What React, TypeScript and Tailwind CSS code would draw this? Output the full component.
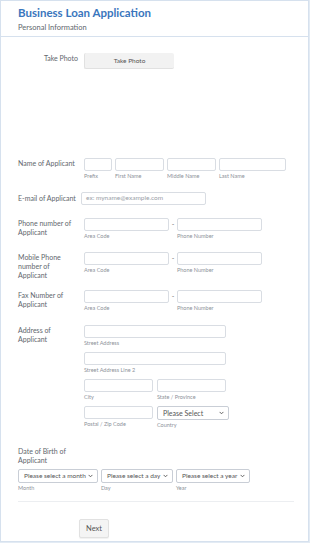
import React from 'react';

const font = { fontFamily: 'Lato, "Noto Sans", sans-serif' };

function Input({ className = '', placeholder }: { className?: string; placeholder?: string }) {
    return (
        <div className={`h-[13px] border border-[#d9dde3] rounded-[2px] bg-white flex items-center px-[4px] ${className}`}>
            {placeholder && <span className="text-[6.5px] text-[#9aa0a8] leading-none whitespace-nowrap">{placeholder}</span>}
        </div>
    );
}

function Chevron() {
    return (
        <svg width="5" height="4" viewBox="0 0 5 4" className="shrink-0">
            <path d="M0.6 0.9 L2.5 2.8 L4.4 0.9" fill="none" stroke="#555" strokeWidth="0.9" />
        </svg>
    );
}

function Select({ className = '', text, size = 'text-[6.5px]' }: { className?: string; text: string; size?: string }) {
    return (
        <div className={`h-[14px] border border-[#c9ced6] rounded-[2px] bg-white flex items-center justify-between pl-[5px] pr-[4px] gap-[2px] ${className}`}>
            <span className={`${size} text-[#555] leading-none whitespace-nowrap`}>{text}</span>
            <Chevron />
        </div>
    );
}

function Sub({ children }: { children: React.ReactNode }) {
    return <div className="text-[5.5px] leading-[7px] text-[#8d929a] mt-[2px] whitespace-nowrap">{children}</div>;
}

function Field({ width, sub }: { width: string; sub: string }) {
    return (
        <div className={width}>
            <Input />
            <Sub>{sub}</Sub>
        </div>
    );
}

function Label({ children }: { children: React.ReactNode }) {
    return <div className="w-[66px] shrink-0 pr-[8px] text-[7px] leading-[9px] text-[#62676e] pt-[1px]">{children}</div>;
}

function PhoneRow() {
    return (
        <div className="flex items-start">
            <Field width="w-[85px]" sub="Area Code" />
            <div className="w-[8px] text-center text-[7px] leading-[12px] text-[#777]">-</div>
            <Field width="w-[85px]" sub="Phone Number" />
        </div>
    );
}

export default function App() {
    return (
        <div style={font} className="w-[310px] h-[543px] bg-[#e3ebf4] overflow-hidden">
            <div className="w-[309px] h-[542px] bg-white border border-[#d6e1ee] flex flex-col">
                {/* header */}
                <div className="h-[36px] border-b border-[#d6e1ee] pl-[17px] pr-[16px] pt-[4px]">
                    <h1 className="text-[11.5px] leading-[15px] font-bold text-[#3a76bd]">Business Loan Application</h1>
                    <p className="mt-[2px] text-[7.5px] leading-[11px] text-[#62676e]">Personal Information</p>
                </div>

                {/* take photo widget */}
                <div className="h-[120px] pt-[16px] flex items-start">
                    <div className="w-[83px] shrink-0 pr-[6px] text-right text-[7px] leading-[10px] text-[#62676e]">Take Photo</div>
                    <div className="w-[90px] h-[16px] bg-[#f2f2f2] border-l border-b border-[#e1e1e1] rounded-[2px] flex items-center justify-center text-[6.5px] text-[#555]">Take Photo</div>
                </div>

                <div className="pl-[17px]">
                    {/* name */}
                    <div className="h-[35px] pt-[1px] flex items-start">
                        <Label>Name of Applicant</Label>
                        <div className="flex gap-[3px]">
                            <Field width="w-[28px]" sub="Prefix" />
                            <Field width="w-[49px]" sub="First Name" />
                            <Field width="w-[49px]" sub="Middle Name" />
                            <Field width="w-[67px]" sub="Last Name" />
                        </div>
                    </div>

                    {/* email */}
                    <div className="h-[26px] flex items-start">
                        <div className="w-[63px] shrink-0 text-[7px] leading-[9px] text-[#62676e] pt-[2px] whitespace-nowrap">E-mail of Applicant</div>
                        <Input className="w-[125px]" placeholder="ex: myname@example.com" />
                    </div>

                    {/* phone */}
                    <div className="h-[34px] flex items-start">
                        <Label>Phone number of Applicant</Label>
                        <PhoneRow />
                    </div>

                    {/* mobile */}
                    <div className="h-[38px] flex items-start">
                        <Label>Mobile Phone number of Applicant</Label>
                        <PhoneRow />
                    </div>

                    {/* fax */}
                    <div className="h-[35px] flex items-start">
                        <Label>Fax Number of Applicant</Label>
                        <PhoneRow />
                    </div>

                    {/* address */}
                    <div className="h-[122px] flex items-start">
                        <Label>Address of Applicant</Label>
                        <div className="flex flex-col gap-[5px]">
                            <Field width="w-[142px]" sub="Street Address" />
                            <Field width="w-[142px]" sub="Street Address Line 2" />
                            <div className="flex gap-[4px]">
                                <Field width="w-[69px]" sub="City" />
                                <Field width="w-[69px]" sub="State / Province" />
                            </div>
                            <div className="flex gap-[4px] items-start">
                                <Field width="w-[69px]" sub="Postal / Zip Code" />
                                <div className="w-[72px]">
                                    <Select text="Please Select" size="text-[7px]" />
                                    <Sub>Country</Sub>
                                </div>
                            </div>
                        </div>
                    </div>

                    {/* date of birth */}
                    <div className="h-[54px] pr-[16px]">
                        <div className="w-[66px] text-[7px] leading-[9px] text-[#62676e]">Date of Birth of Applicant</div>
                        <div className="flex gap-[3px] mt-[4px]">
                            <div className="w-[80px]">
                                <Select text="Please select a month" />
                                <Sub>Month</Sub>
                            </div>
                            <div className="w-[72px]">
                                <Select text="Please select a day" />
                                <Sub>Day</Sub>
                            </div>
                            <div className="w-[74px]">
                                <Select text="Please select a year" />
                                <Sub>Year</Sub>
                            </div>
                        </div>
                    </div>

                    <div className="w-[276px] border-t border-[#eceef1]" />

                    <div className="pt-[11px] pl-[61px]">
                        <button className="w-[30px] h-[19px] bg-[#f4f4f4] border border-[#e1e1e1] rounded-[2px] shadow-[0_1px_1px_rgba(0,0,0,0.06)] text-[7.5px] text-[#555]">Next</button>
                    </div>
                </div>
            </div>
        </div>
    );
}
